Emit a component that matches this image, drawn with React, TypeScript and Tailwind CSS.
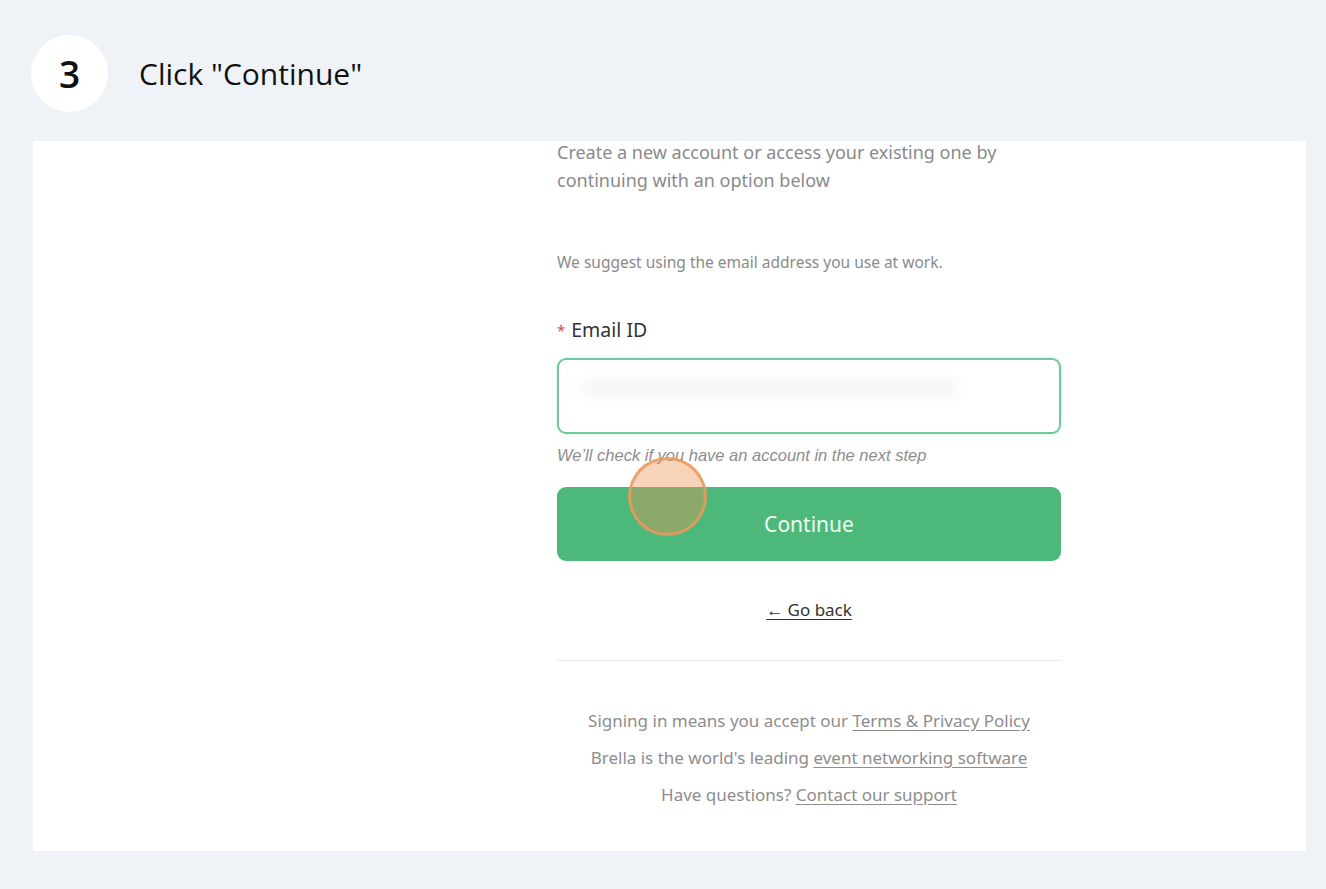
const plex = { fontFamily: '"Noto Sans", "Open Sans", sans-serif' };

export default function App() {
  return (
    <div className="w-full h-[889px] bg-[#eff3f8] flex flex-col">
      <div className="h-[141px] flex items-start pt-[35px] pl-[31px] gap-[31px]" style={{ fontFamily: '"Open Sans", sans-serif' }}>
        <div className="w-[77px] h-[77px] rounded-full bg-white flex items-center justify-center text-[37px] font-semibold text-[#111]">
          3
        </div>
        <div className="h-[77px] flex items-center text-[30px] text-[#111]">Click "Continue"</div>
      </div>

      <div className="ml-[33px] mr-[20px] h-[710px] bg-white pl-[524px]" style={plex}>
        <div className="w-[504px] flex flex-col">
          <p className="-mt-[3px] text-[18px] leading-[28px] text-[#8a8a8a]">
            Create a new account or access your existing one by continuing with an option below
          </p>
          <p className="mt-[57px] text-[15.5px] text-[#8a8a8a]">We suggest using the email address you use at work.</p>
          <label className="mt-[41px] text-[19.5px] text-[#333] flex items-center gap-[6px]">
            <span className="text-[#d9434e] text-[15px]">*</span>
            Email ID
          </label>
          <div className="mt-[13px] h-[76px] rounded-[9px] border-2 border-[#6fc99a] shadow-[0_0_3px_#bfe8d2] relative overflow-hidden">
            <div className="absolute left-[20px] top-[18px] w-[380px] h-[20px] rounded-full bg-[#f7f7f7] blur-[6px]" />
          </div>
          <p
            className="mt-[9px] text-[16.5px] italic text-[#8d8d8d]"
            style={{ fontFamily: '"Liberation Sans", Arial, sans-serif' }}
          >
            We’ll check if you have an account in the next step
          </p>
          <div className="relative mt-[20px]">
            <button className="w-full h-[74px] rounded-[9px] bg-[#4cb97b] text-[#f0fff4] text-[21px]">Continue</button>
            <div className="absolute left-[71px] top-[-30px] w-[79px] h-[79px] rounded-full border-[3px] border-[#eb9a5e]/85 bg-[#ec9250]/40" />
          </div>
          <div className="mt-[36px] flex justify-center">
            <a className="text-[17px] text-[#333] underline underline-offset-[3px]">← Go back</a>
          </div>
          <div className="mt-[37px] h-px bg-[#ececec]" />
          <div className="mt-[48px] flex flex-col items-center gap-[14px] text-[17px] text-[#8d8d8d] leading-[23px]">
            <p>
              Signing in means you accept our <span className="underline underline-offset-[3px]">Terms &amp; Privacy Policy</span>
            </p>
            <p>
              Brella is the world's leading <span className="underline underline-offset-[3px]">event networking software</span>
            </p>
            <p>
              Have questions? <span className="underline underline-offset-[3px]">Contact our support</span>
            </p>
          </div>
        </div>
      </div>
    </div>
  );
}
